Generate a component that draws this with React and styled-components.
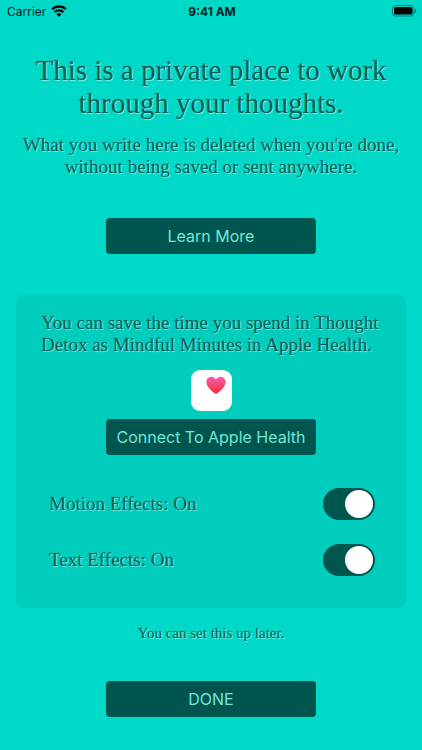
import React, { useState } from "react";
import styled, { createGlobalStyle } from "styled-components";

const GlobalStyle = createGlobalStyle`
  * {
    box-sizing: border-box;
  }

  body {
    margin: 0;
    background: #00d9c7;
    color: #075c53;
    font-family: Charter, "Liberation Serif", serif;
  }
`;

const Screen = styled.div`
  min-height: 100vh;
  display: flex;
  flex-direction: column;
`;

const StatusBar = styled.header`
  display: grid;
  grid-template-columns: 1fr auto 1fr;
  align-items: center;
  height: 22px;
  padding: 0 5px 0 7px;
  color: #04201d;
  font-family: Inter, sans-serif;
  font-size: 12px;
`;

const Carrier = styled.div`
  display: flex;
  align-items: center;
  gap: 5px;
`;

const Clock = styled.div`
  font-weight: 700;
`;

const Battery = styled.div`
  display: flex;
  justify-content: flex-end;
`;

const Main = styled.main`
  display: flex;
  flex-direction: column;
  align-items: center;
  padding: 32px 16px;
`;

const Text = styled.p`
  margin: 0;
  font-size: ${(props) => props.$size}px;
  font-weight: 400;
  line-height: ${(props) => props.$leading}px;
  text-align: ${(props) => props.$align || "center"};
  text-shadow: 1px 1px 1px rgba(255, 255, 255, 0.5);
`;

const Button = styled.button`
  width: 210px;
  height: 36px;
  padding: 0;
  border: 0;
  border-radius: 4px;
  background: #00564e;
  color: #72e6d6;
  font-family: Inter, sans-serif;
  font-size: 16px;
  cursor: pointer;
`;

const Intro = styled.section`
  display: flex;
  flex-direction: column;
  align-items: center;
  gap: 14px;
  margin-bottom: 40px;
`;

const Panel = styled.section`
  display: flex;
  flex-direction: column;
  align-items: center;
  align-self: stretch;
  margin: 41px 0 14px;
  padding: 17px 25px 32px;
  border-radius: 8px;
  background: #00cdbc;
`;

const PanelText = styled(Text)`
  align-self: flex-start;
`;

const HealthIcon = styled.svg`
  margin: 14px 0 8px;
`;

const Settings = styled.div`
  display: flex;
  flex-direction: column;
  align-self: stretch;
  gap: 24px;
  margin-top: 33px;
  padding: 0 6px 0 8px;
`;

const SettingRow = styled.label`
  display: flex;
  align-items: center;
  justify-content: space-between;
  height: 32px;
  cursor: pointer;
`;

const Switch = styled.input`
  appearance: none;
  display: flex;
  align-items: center;
  width: 52px;
  height: 32px;
  margin: 0;
  padding: 2px;
  border-radius: 16px;
  background: #009e90;
  cursor: pointer;

  &::before {
    content: "";
    width: 28px;
    height: 28px;
    border-radius: 50%;
    background: #fff;
  }

  &:checked {
    justify-content: flex-end;
    background: #00564e;
  }
`;

const Footer = styled.footer`
  display: flex;
  flex-direction: column;
  align-items: center;
  gap: 37px;
`;

function WifiIcon() {
  return (
    <svg width="16" height="12" viewBox="0 0 16 12" aria-hidden="true">
      <g fill="none" stroke="#000" strokeWidth="2.3">
        <path d="M1.2 4.3a9.6 9.6 0 0 1 13.6 0" />
        <path d="M3.7 7.1a6.1 6.1 0 0 1 8.6 0" />
      </g>
      <path d="M8 11.8 5.5 9.2a3.6 3.6 0 0 1 5 0Z" />
    </svg>
  );
}

function BatteryIcon() {
  return (
    <svg width="25" height="12" viewBox="0 0 25 12" aria-hidden="true">
      <rect
        x="0.5"
        y="0.5"
        width="21.5"
        height="10.5"
        rx="3"
        fill="none"
        stroke="#000"
        strokeOpacity="0.4"
      />
      <rect x="2" y="2" width="18.5" height="7.5" rx="1.5" />
      <path d="M23 4v4c1.6-.6 1.6-3.4 0-4Z" fillOpacity="0.5" />
    </svg>
  );
}

function AppleHealthIcon() {
  return (
    <HealthIcon width="41" height="41" viewBox="0 0 41 41" aria-hidden="true">
      <defs>
        <linearGradient id="heart" x1="0" y1="0" x2="0" y2="1">
          <stop offset="0" stopColor="#f660ae" />
          <stop offset="1" stopColor="#fb2a34" />
        </linearGradient>
      </defs>
      <rect width="41" height="41" rx="9" fill="#fff" />
      <path
        d="M25 23.7c-1.2 0-9.6-6-9.6-11.8 0-3 2.2-5.2 4.9-5.2 2 0 3.7 1.1 4.7 2.8 1-1.7 2.7-2.8 4.7-2.8 2.7 0 4.9 2.2 4.9 5.2 0 5.8-8.4 11.8-9.6 11.8Z"
        fill="url(#heart)"
      />
    </HealthIcon>
  );
}

function Setting({ name }) {
  const [on, setOn] = useState(true);

  return (
    <SettingRow>
      <Text as="span" $size={19} $leading={22}>
        {name}: {on ? "On" : "Off"}
      </Text>
      <Switch
        type="checkbox"
        role="switch"
        checked={on}
        onChange={(e) => setOn(e.target.checked)}
      />
    </SettingRow>
  );
}

export default function App() {
  return (
    <Screen>
      <GlobalStyle />
      <StatusBar>
        <Carrier>
          Carrier
          <WifiIcon />
        </Carrier>
        <Clock>9:41 AM</Clock>
        <Battery>
          <BatteryIcon />
        </Battery>
      </StatusBar>
      <Main>
        <Intro>
          <Text as="h1" $size={29} $leading={33}>
            This is a private place to work
            <br />
            through your thoughts.
          </Text>
          <Text $size={19} $leading={22}>
            What you write here is deleted when you're done,
            <br />
            without being saved or sent anywhere.
          </Text>
        </Intro>
        <Button>Learn More</Button>
        <Panel>
          <PanelText $size={19} $leading={22} $align="left">
            You can save the time you spend in Thought
            <br />
            Detox as Mindful Minutes in Apple Health.
          </PanelText>
          <AppleHealthIcon />
          <Button>Connect To Apple Health</Button>
          <Settings>
            <Setting name="Motion Effects" />
            <Setting name="Text Effects" />
          </Settings>
        </Panel>
        <Footer>
          <Text $size={15} $leading={22}>
            You can set this up later.
          </Text>
          <Button>DONE</Button>
        </Footer>
      </Main>
    </Screen>
  );
}
